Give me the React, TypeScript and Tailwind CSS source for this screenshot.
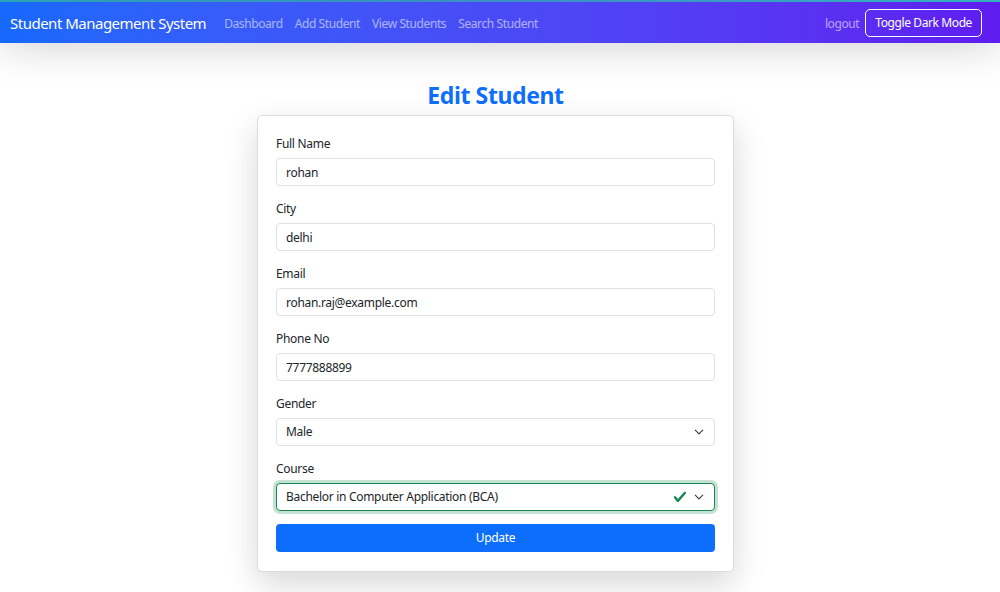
import React from "react";

const font = { fontFamily: '"Noto Sans", "Open Sans", sans-serif' };

const navLinks = ["Dashboard", "Add Student", "View Students", "Search Student"];

function Chevron() {
  return (
    <svg viewBox="0 0 16 16" className="w-[10px] h-[10px]">
      <path d="m2 5 6 6 6-6" fill="none" stroke="#343a40" strokeWidth="1.8" strokeLinecap="round" strokeLinejoin="round" />
    </svg>
  );
}

function ValidCheck() {
  return (
    <svg viewBox="0 0 8 8" className="w-[14px] h-[14px]">
      <path
        fill="#198754"
        d="M2.3 6.73.6 4.53c-.4-1.04.46-1.4 1.1-.8l1.1 1.4 3.4-3.8c.6-.63 1.6-.27 1.2.7l-4 4.6c-.43.5-.8.4-1.1.1z"
      />
    </svg>
  );
}

function TextField({ label, value }: { label: string; value: string }) {
  return (
    <div className="mb-[13px]">
      <label className="block text-[12px] tracking-[-0.3px] leading-[19px] mb-[5px] text-[#212529]">{label}</label>
      <input
        defaultValue={value}
        className="block w-full h-7 px-[9px] text-[12px] tracking-[-0.3px] text-[#212529] bg-white border border-[#dee2e6] rounded-[4px] outline-none"
        style={font}
      />
    </div>
  );
}

function SelectField({
  label,
  value,
  valid = false,
}: {
  label: string;
  value: string;
  valid?: boolean;
}) {
  return (
    <div className="mb-[13px]">
      <label className="block text-[12px] tracking-[-0.3px] leading-[19px] mb-[5px] text-[#212529]">{label}</label>
      <div className="relative">
        <select
          defaultValue={value}
          className={`block w-full h-7 pl-[9px] pr-12 text-[12px] tracking-[-0.3px] text-[#212529] bg-white rounded-[4px] outline-none appearance-none border ${
            valid
              ? "border-[#198754] shadow-[0_0_0_3px_rgba(25,135,84,0.25)]"
              : "border-[#dee2e6]"
          }`}
          style={font}
        >
          <option>{value}</option>
        </select>
        <div className="absolute right-[11px] top-0 h-7 flex items-center gap-[7px] pointer-events-none">
          {valid && <ValidCheck />}
          <Chevron />
        </div>
      </div>
    </div>
  );
}

export default function App() {
  return (
    <div className="min-h-[592px] bg-white" style={font}>
      <div className="relative z-10 shadow-[0_2px_44px_rgba(0,0,0,0.2)]">
        <div className="h-[2px] bg-linear-to-r from-[#2aa3b3] via-[#3b8fc4] to-[#34b0bf]" />
        <nav className="h-[41px] flex items-center justify-between pl-[10px] pr-[18px] bg-linear-to-r from-[#1569fb] to-[#5f1bf0]">
          <div className="flex items-center pt-[2px]">
            <span className="text-white text-[15px] tracking-[-0.5px] mr-[18px]">Student Management System</span>
            <div className="flex items-center gap-[12px]">
              {navLinks.map((l) => (
                <a key={l} className="text-[12px] tracking-[-0.4px] text-white/55">
                  {l}
                </a>
              ))}
            </div>
          </div>
          <div className="flex items-center gap-[6px]">
            <a className="text-[12px] tracking-[-0.4px] text-white/55 pt-[2px]">logout</a>
            <button className="h-[28px] px-[9px] border border-white rounded-[5px] text-white text-[12px] tracking-[-0.4px]">
              Toggle Dark Mode
            </button>
          </div>
        </nav>
      </div>

      <div className="flex flex-col items-center pt-[37px] pb-5 pr-[9px]">
        <h1 className="text-[23px] leading-[30px] font-bold tracking-[-0.4px] text-[#0d6efd] mb-[5px]">Edit Student</h1>
        <div className="w-[477px] bg-white border border-[#dcdcdc] rounded-[5px] shadow-[0_12px_32px_rgba(0,0,0,0.16)] px-[18px] pt-[18px] pb-[19px]">
          <TextField label="Full Name" value="rohan" />
          <TextField label="City" value="delhi" />
          <TextField label="Email" value="rohan.raj@example.com" />
          <TextField label="Phone No" value="7777888899" />
          <SelectField label="Gender" value="Male" />
          <SelectField label="Course" value="Bachelor in Computer Application (BCA)" valid />
          <button className="w-full h-7 bg-[#0d6efd] text-white text-[12px] tracking-[-0.3px] rounded-[4px]">Update</button>
        </div>
      </div>
    </div>
  );
}
